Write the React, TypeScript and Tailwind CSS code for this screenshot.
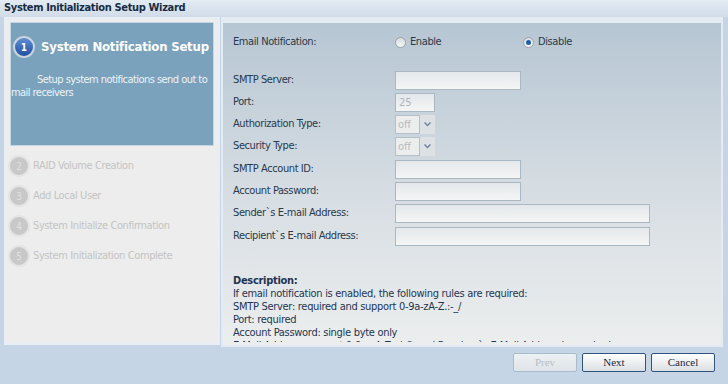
import React from "react"

const font = "font-['Tahoma','DejaVu_Sans_Condensed','DejaVu_Sans',sans-serif]"

const steps = [
  { n: 2, label: "RAID Volume Creation" },
  { n: 3, label: "Add Local User" },
  { n: 4, label: "System Initialize Confirmation" },
  { n: 5, label: "System Initialization Complete" },
]

function TextBox({ w, value }: { w: string; value?: string }) {
  return (
    <div
      className={`${w} h-[19px] border border-[#a9b8c3] bg-gradient-to-b from-[#e4e8eb] to-[#f4f5f5] px-[3px] text-[11px] leading-[17px] text-[#b0b4b8]`}
    >
      {value}
    </div>
  )
}

function Select() {
  return (
    <div className="flex h-[19px] w-[40px]">
      <div className="w-[25px] border border-[#b4c0c8] bg-[#eceeee] px-[2px] text-[11px] leading-[17px] text-[#b8bcc0]">
        off
      </div>
      <div className="flex w-[15px] items-center justify-center bg-[#dde1e4]">
        <svg width="7" height="5" viewBox="0 0 7 5">
          <path d="M0.5 0.5 L3.5 3.5 L6.5 0.5" stroke="#6d86a8" strokeWidth="1.5" fill="none" />
        </svg>
      </div>
    </div>
  )
}

function Row({ label, h, children }: { label: string; h: string; children: React.ReactNode }) {
  return (
    <div className={`flex ${h} items-center`}>
      <div className="w-[162px] text-[11px] tracking-[-0.4px] text-[#283a4c]">{label}</div>
      {children}
    </div>
  )
}

function Radio({ checked, label }: { checked?: boolean; label: string }) {
  return (
    <div className="flex items-center gap-[4px]">
      <span className="flex size-[11px] items-center justify-center rounded-full border border-[#9aa4ad] bg-gradient-to-b from-[#d8dcdf] to-[#f5f6f6]">
        {checked && <span className="size-[5px] rounded-full bg-[#1d5fa8]" />}
      </span>
      <span className="text-[11px] tracking-[-0.4px] text-[#283a4c]">{label}</span>
    </div>
  )
}

function Button({ label, disabled }: { label: string; disabled?: boolean }) {
  return (
    <div
      className={`flex h-[19px] w-[64px] items-center justify-center rounded-[2px] border bg-gradient-to-b font-['Liberation_Serif',serif] text-[11px] ${
        disabled
          ? "border-[#a7bccd] from-[#eef1f3] to-[#dfe4e8] text-[#b6bec6]"
          : "border-[#2f557e] from-[#ffffff] to-[#dcdfe3] text-[#1b2a3a]"
      }`}
    >
      {label}
    </div>
  )
}

export default function App() {
  return (
    <div className={`flex h-[384px] w-[728px] flex-col overflow-hidden bg-[#c5d5e5] ${font}`}>
      <div className="h-[17px] bg-gradient-to-b from-[#e3ebf3] to-[#d0dce8] pl-[4px] text-[11px] leading-[16px] font-bold tracking-[-0.35px] text-[#182c44]">
        System Initialization Setup Wizard
      </div>

      <div className="flex h-[330px] pl-[4px]">
        <div className="flex h-[328px] w-[216px] flex-col border-[2px] border-[#e8eef5] bg-[#ecedec] pt-[3px] pl-[4px] pr-[4px]">
          <div className="h-[124px] border border-[#c5d7e5] bg-[#7aa2bc] pt-[13px] text-white">
            <div className="flex items-center gap-[6px] pl-[2px]">
              <span className="flex size-[22px] items-center justify-center rounded-full border-[2px] border-[#c9d4dc] bg-gradient-to-b from-[#5f8fd6] to-[#1f4fa0] text-[10px] font-bold text-white">
                1
              </span>
              <span className="whitespace-nowrap text-[13px] font-bold tracking-[-0.2px]">
                System Notification Setup
              </span>
            </div>
            <p className="mt-[15px] text-[11px] leading-[13px] tracking-[-0.55px] text-[#eef3f7] indent-[26px]">
              Setup system notifications send out to mail receivers
            </p>
          </div>
          <div className="mt-[9px] flex flex-col gap-[8px]">
            {steps.map((s) => (
              <div key={s.n} className="-ml-[2px] flex h-[22px] items-center gap-[3px]">
                <span className="flex size-[22px] items-center justify-center rounded-full border-[2px] border-[#e4e4e4] bg-[#c8c8c8] text-[10px] text-[#e0e0e0]">
                  {s.n}
                </span>
                <span className="text-[11px] tracking-[-0.4px] text-[#c4c4c4]">{s.label}</span>
              </div>
            ))}
          </div>
        </div>

        <div className="ml-[1px] h-[330px] w-[502px] border-[2px] border-t-[6px] border-[#e4ebf3] bg-gradient-to-b from-[#b6c6d3] via-[#d5dce2] to-[#eceeee]">
          <div className="h-[319px] overflow-hidden pl-[10px] pt-[8px]">
            <div className="flex h-[22px] items-center">
              <div className="w-[162px] text-[11px] tracking-[-0.4px] text-[#283a4c]">Email Notification:</div>
              <div className="w-[128px]">
                <Radio label="Enable" />
              </div>
              <Radio checked label="Disable" />
            </div>
            <div className="h-[16px]" />
            <Row label="SMTP Server:" h="h-[22px]">
              <TextBox w="w-[126px]" />
            </Row>
            <Row label="Port:" h="h-[22px]">
              <TextBox w="w-[40px]" value="25" />
            </Row>
            <Row label="Authorization Type:" h="h-[22px]">
              <Select />
            </Row>
            <Row label="Security Type:" h="h-[23px]">
              <Select />
            </Row>
            <Row label="SMTP Account ID:" h="h-[22px]">
              <TextBox w="w-[126px]" />
            </Row>
            <Row label="Account Password:" h="h-[22px]">
              <TextBox w="w-[126px]" />
            </Row>
            <Row label="Sender`s E-mail Address:" h="h-[23px]">
              <TextBox w="w-[255px]" />
            </Row>
            <Row label="Recipient`s E-mail Address:" h="h-[22px]">
              <TextBox w="w-[255px]" />
            </Row>

            <div className="mt-[27px] text-[11px] leading-[13px] tracking-[-0.3px] text-[#1f3552]">
              <div className="font-bold">Description:</div>
              <div>If email notification is enabled, the following rules are required:</div>
              <div>SMTP Server: required and support 0-9a-zA-Z.:-_/</div>
              <div>Port: required</div>
              <div>Account Password: single byte only</div>
              <div>E-Mail Address: support 0-9a-zA-Z._/-@ and Receiver`s E-Mail Address is required</div>
            </div>
          </div>
        </div>
      </div>

      <div className="flex flex-1 items-start justify-end gap-[5px] pt-[6px] pr-[13px]">
        <Button label="Prev" disabled />
        <Button label="Next" />
        <Button label="Cancel" />
      </div>
    </div>
  )
}
